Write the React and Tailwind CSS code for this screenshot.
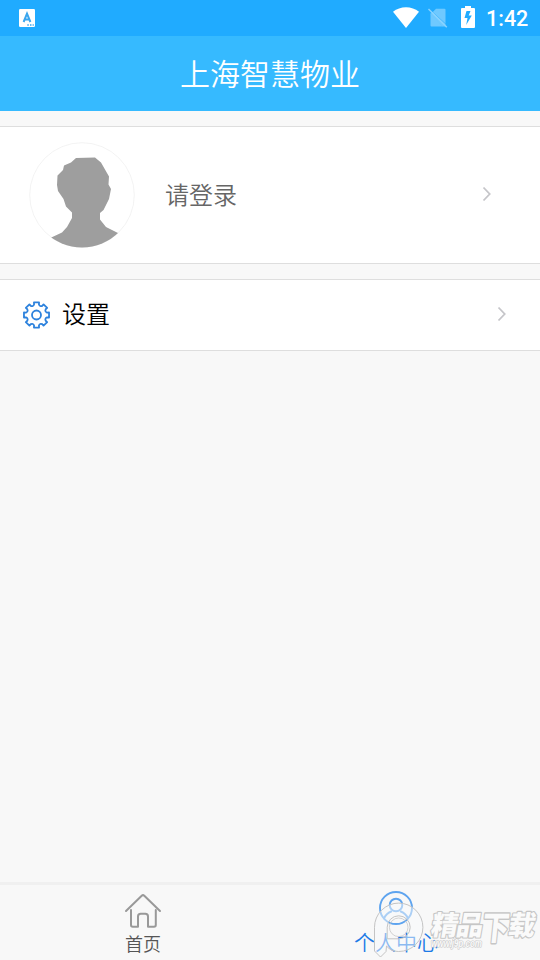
import React from 'react'

const StatusBar = () => (
  <div className="flex h-9 items-center bg-[#20abff] text-white">
    <svg className="ml-[19px]" width="16" height="18" viewBox="0 0 16 18">
      <rect width="16" height="18" rx="1.2" fill="#fff" />
      <path d="M4.6 13 8 4.6 11.4 13M5.8 10.4h4.4" fill="none" stroke="#3aa6ee" strokeWidth="2" />
      <path d="M8.3 16h1.5M11 16h1.5M13.6 16h1.2" stroke="#3aa6ee" strokeWidth="1.3" />
    </svg>
    <svg className="ml-[358px]" width="26" height="22" viewBox="0 0 26 22">
      <path d="M0 4.8Q5.6.3 13 .3t13 4.5L13 21Z" fill="#fff" />
    </svg>
    <svg className="ml-[9px]" width="20" height="20" viewBox="0 0 20 20">
      <path d="M8 .8h8.500q1 0 1 1v13.800L4.800 4ZM2.500 5 14.800 18.500H3.500q-1 0-1-1Z" fill="#6fc9ff" />
      <path d="M4.500 4 17.500 16V18.500H14.500L2.500 6Z" fill="#6fc9ff" />
      <path d="M.5 1 18.800 19.200" stroke="#8ad3ff" strokeWidth="1.500" />
    </svg>
    <svg className="mb-0.5 ml-[13px]" width="14" height="22" viewBox="0 0 14 22">
      <path d="M4 0h6v2h3q1 0 1 1v18q0 1-1 1H1q-1 0-1-1V3q0-1 1-1h3Z" fill="#fff" />
      <path d="M9.500 5H5.500L3.500 12h3l-1.300 7 5.600-9.500H7.700Z" fill="#20abff" />
    </svg>
    <span className="ml-[11px] mt-px whitespace-nowrap font-['Roboto',sans-serif] text-[21.5px] font-medium leading-[34px]">
      1:42
    </span>
  </div>
)

const Avatar = () => (
  <svg width="106" height="106" viewBox="0 0 106 106">
    <defs>
      <clipPath id="avatar">
        <circle cx="53" cy="53" r="52.5" />
      </clipPath>
    </defs>
    <circle cx="53" cy="53" r="52.3" fill="#fff" stroke="#f0f0f0" strokeWidth="0.8" />
    <path
      clipPath="url(#avatar)"
      d="M47 16 66 15.500 72 20.500 80 34.500 79.500 42.500 82 47 80 57 74.500 68 71 71V77.500L77 85 91 92V106H18V97.500L33 90.500 38 85 43 76V70.500L37 64.500 34.500 57 29 49 28 43 28.500 33.500 34 28 35 23.500 42 20.500Z"
      fill="#9e9e9e"
    />
  </svg>
)

const Chevron = ({ className }) => (
  <svg className={className} width="10" height="16" viewBox="0 0 10 16" fill="none">
    <path d="m1.500 1.500 6.200 6.500-6.200 6.500" stroke="#c5c5c9" strokeWidth="1.800" />
  </svg>
)

// Eight teeth joined by rounded notches
const gearPath = () => {
  const point = (radius, degrees) => {
    const a = (degrees * Math.PI) / 180
    return `${(14 + radius * Math.cos(a)).toFixed(2)} ${(14 + radius * Math.sin(a)).toFixed(2)}`
  }
  let d = ''
  for (let i = 0; i < 8; i++) {
    const a = i * 45
    d += `${i ? 'L' : 'M'}${point(10.8, a - 13)}L${point(12.8, a - 11.5)}L${point(12.8, a + 11.5)}L${point(10.8, a + 13)}Q${point(8.8, a + 22.5)} ${point(10.8, a + 32)}`
  }
  return d + 'Z'
}

const GearIcon = () => (
  <svg className="mb-px" width="29" height="28" viewBox="-.5 0 29 28" fill="none" stroke="#2d82dd" strokeWidth="1.800" strokeLinejoin="round">
    <path d={gearPath()} />
    <circle cx="14" cy="14" r="4.500" />
  </svg>
)

const HomeIcon = () => (
  <svg width="38" height="36" viewBox="0 0 38 36" fill="none" stroke="#999" strokeWidth="2" strokeLinecap="round" strokeLinejoin="round">
    <path d="M2 18 17.700 2.700Q19 1.500 20.300 2.700L36 18" />
    <path d="M7 17v15q0 1.800 1.800 1.800H14V23.500q0-2.700 2.700-2.700h4.600q2.700 0 2.700 2.700v10.300h6q1.800 0 1.800-1.800v-15" />
  </svg>
)

const UserIcon = () => (
  <svg width="36" height="36" viewBox="0 0 36 36" fill="none" stroke="#5ea4ef" strokeWidth="1.900">
    <circle cx="18" cy="18" r="16" />
    <circle cx="18" cy="15" r="6.300" />
    <path d="M6 28.500Q8.200 23.500 13.200 21.500M22.800 21.500Q27.800 23.500 30 28.500" strokeLinecap="round" />
  </svg>
)

const Watermark = () => (
  <div className="absolute bottom-0 right-0 h-[60px] w-[170px]">
    <svg width="170" height="60" viewBox="0 0 170 60">
      <path
        d="M4.500 27.300a24.200 24.200 0 1 1 24.200 24.200Q21 51.500 16.500 46L16 51.500 10.500 57 4.500 51Z M17.200 27.300a11.500 11.500 0 1 1 11.500 11.500H17.200Z"
        fill="#f8f9fb"
        fillOpacity=".5"
        fillRule="evenodd"
        stroke="#c4c4c4"
        strokeWidth="1"
      />
      <circle cx="28.700" cy="27.300" r="9.300" fill="none" stroke="#c8c8c8" strokeWidth=".8" />
      <g fill="#fafafa" stroke="#c6c6c6" strokeWidth="2.200" strokeLinejoin="round" className="[paint-order:stroke]">
        <g className="font-['Noto_Sans_CJK_SC',sans-serif] font-black">
          <text transform="translate(60 35) skewX(-10)" fontSize="27" textLength="52">精品</text>
          <text transform="translate(111 39.500) skewX(-6) scale(1 1.250)" fontSize="27">下</text>
          <text transform="translate(137 35) skewX(-10)" fontSize="27">载</text>
        </g>
        <text
          className="font-['Liberation_Sans',sans-serif]"
          x="61"
          y="46.500"
          fontSize="10"
          fontWeight="700"
          fontStyle="italic"
          strokeWidth="1.200"
          textLength="51"
          lengthAdjust="spacingAndGlyphs"
        >
          www.j9p.com
        </text>
      </g>
    </svg>
  </div>
)

const App = () => {
  return (
    <div className="relative flex h-[960px] w-[540px] flex-col overflow-hidden bg-[#f8f8f8] font-['Noto_Sans_CJK_SC',sans-serif]">
      <StatusBar />

      <header className="flex h-[75px] items-center justify-center bg-[#36baff]">
        <h1 className="pb-[3px] text-[30px] font-[350] leading-[72px] text-white">上海智慧物业</h1>
      </header>

      <main className="flex flex-1 flex-col gap-[15px] pt-[15px]">
        <div className="flex h-[138px] items-center border-y border-[#dedede] bg-white pl-[29px] pr-12">
          <Avatar />
          <span className="ml-[30px] pb-[3px] text-2xl font-[350] text-[#666]">请登录</span>
          <Chevron className="mb-0.5 ml-auto" />
        </div>

        <div className="flex h-[72px] items-center border-y border-[#dedede] bg-white pl-[22px] pr-[33px]">
          <GearIcon />
          <span className="ml-[11px] pb-1 text-2xl font-[350] text-black">设置</span>
          <Chevron className="mb-0.5 ml-auto" />
        </div>
      </main>

      <nav className="flex h-[78px] border-t-[3px] border-[#f0f0f0] px-4">
        <div className="flex w-[254px] flex-col items-center pt-2">
          <HomeIcon />
          <span className="mt-0.5 text-lg font-[350] leading-6 text-[#555]">首页</span>
        </div>
        <div className="flex w-[252px] flex-col items-center pt-[5px]">
          <UserIcon />
          <span className="mt-[3px] text-[21px] font-[350] leading-6 text-[#1d7ae6]">个人中心</span>
        </div>
      </nav>

      <Watermark />
    </div>
  )
}

export default App
